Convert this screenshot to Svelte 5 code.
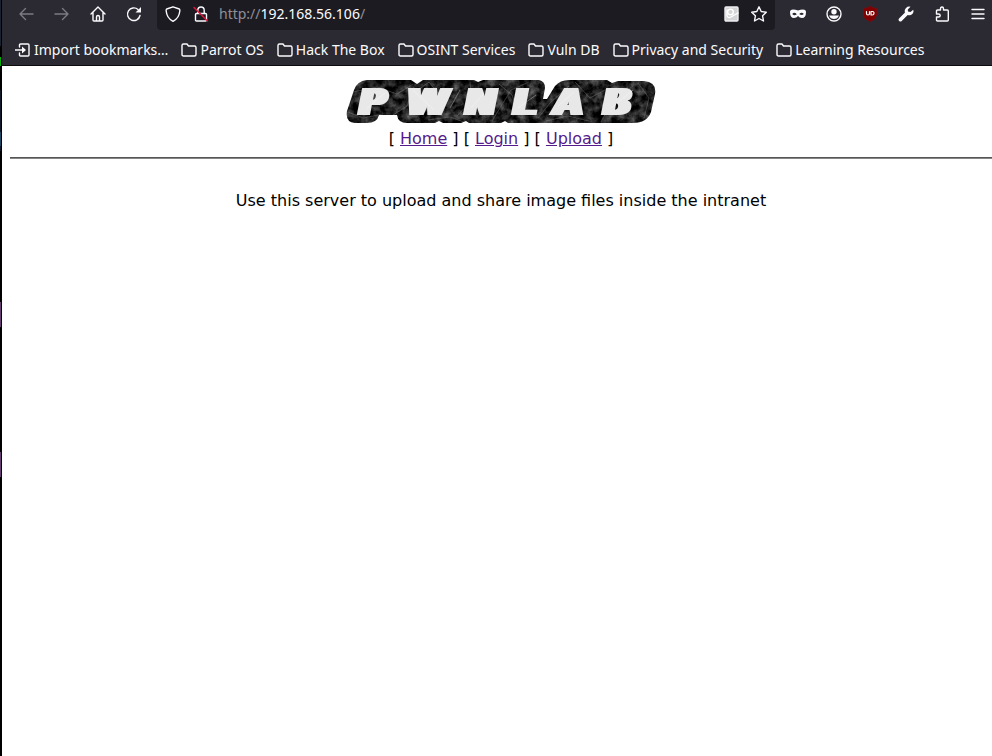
<script lang="ts">
  interface Bookmark {
    name: string
    kind: 'import' | 'folder'
  }

  const bookmarks: Bookmark[] = [
    { name: 'Import bookmarks…', kind: 'import' },
    { name: 'Parrot OS', kind: 'folder' },
    { name: 'Hack The Box', kind: 'folder' },
    { name: 'OSINT Services', kind: 'folder' },
    { name: 'Vuln DB', kind: 'folder' },
    { name: 'Privacy and Security', kind: 'folder' },
    { name: 'Learning Resources', kind: 'folder' },
  ]
  const links = ['Home', 'Login', 'Upload']

  let address = $state('192.168.56.106')
</script>

<div class="desktop">
  <div class="behind"></div>
  <div class="window">
    <header>
      <div class="toolbar">
        <nav class="tools">
          <button class="dim" aria-label="Back">
            <svg width="16" height="16" viewBox="0 0 16 16"><path d="M15 8H2M7.500 2.500 2 8l5.500 5.500" /></svg>
          </button>
          <button class="dim" aria-label="Forward">
            <svg width="16" height="16" viewBox="0 0 16 16"><path d="M1 8h13M8.500 2.500 14 8l-5.500 5.500" /></svg>
          </button>
          <button aria-label="Home page">
            <svg width="16" height="16" viewBox="0 0 16 16"><path d="M1 8 8 1l7 7M3 6.500V14q0 1 1 1h8q1 0 1-1V6.500M6.500 15v-4q0-1.500 1.500-1.500T9.500 11v4" /></svg>
          </button>
          <button aria-label="Reload">
            <svg width="16" height="16" viewBox="0 0 16 16"><path d="M14 9.500A6.300 6.300 0 1 1 12 3.500" /><path class="solid" d="M15 1v5.500H9.500z" /></svg>
          </button>
        </nav>
        <div class="urlbar">
          <button aria-label="Tracking protection">
            <svg width="16" height="16" viewBox="0 0 16 16"><path d="M8 .8 14.300 3Q15 3.200 14.800 5 14.300 12 8 15.300 1.700 12 1.200 5 1 3.200 1.700 3z" /></svg>
          </button>
          <button aria-label="Connection not secure">
            <svg width="16" height="16" viewBox="0 0 16 16"><path d="M4.800 7V4.500Q4.800 1 8 1t3.200 3.500V7M3.500 7.500h9q1 0 1 1V14q0 1-1 1h-9q-1 0-1-1V8.500q0-1 1-1z" /><path class="strike" d="M1 1.500 14.500 15" /></svg>
          </button>
          <label class="address">
            <span>http://</span><input type="text" aria-label="Address" size="13" bind:value={address} /><span>/</span>
          </label>
          <button aria-label="Reader">
            <svg width="16" height="16" viewBox="0 0 16 16"><rect class="note" x="2" y="1" width="13" height="14" rx="1" /><circle class="pale" cx="7.500" cy="6" r="2.800" /><path class="pale" d="M4 4v6q1 2 3 1.500l8-4.500" /></svg>
          </button>
          <button aria-label="Bookmark this page">
            <svg width="16" height="16" viewBox="0 0 16 16"><path d="m8 .8 2.200 4.700 5.100.7-3.700 3.600.9 5.200L8 12.500 3.500 15l.9-5.200L.7 6.200l5.100-.7z" /></svg>
          </button>
        </div>
        <nav class="tools extensions">
          <button aria-label="Private tab">
            <svg width="16" height="16" viewBox="0 0 16 16"><path class="solid" fill-rule="evenodd" d="M0 6q0-2.500 3-2.500 2.500 0 5 1 2.500-1 5-1 3 0 3 2.500 0 6-4 6-2.500 0-4-2-1.500 2-4 2-4 0-4-6zm2.200 2Q4.300 10.300 6.800 8.200 4.300 5.500 2.200 8zm7 0q2.500 2.200 4.600 0-2-2.500-4.600 0z" /></svg>
          </button>
          <button aria-label="Account">
            <svg width="16" height="16" viewBox="0 0 16 16"><circle cx="8" cy="8" r="7" /><circle class="solid" cx="8" cy="5.700" r="2.700" /><path class="solid" d="M3 9.500h10Q11.500 13 8 13T3 9.500z" /></svg>
          </button>
          <button aria-label="uBlock Origin">
            <svg width="16" height="16" viewBox="0 0 16 16"><path class="ublock" d="M8 .5Q11 2.500 14.500 2.500V9Q14 13 8 15.500 2 13 1.500 9V2.500Q5 2.500 8 .5z" /><path class="mark" d="M4.500 5.500V7.500Q4.500 9 6 9t1.500-1.500v-2M9 5.500V9h1.200Q12 9 12 7.200t-1.800-1.700z" /></svg>
          </button>
          <button aria-label="Developer tools">
            <svg width="16" height="16" viewBox="0 0 16 16"><path class="solid" d="M15.200 3.800 12.500 6 10 5.500 9.800 3.500 12.500.8Q10 0 8 2T7 6.500L1 12.500Q0 14 1.200 15t2.500 0l6-6Q12.500 9.800 14.300 8t.9-4.200z" /></svg>
          </button>
          <button aria-label="Extensions">
            <svg width="16" height="16" viewBox="0 0 16 16"><path d="M6.500 4V2.700Q6.500 1 8 1t1.500 1.700V4h3.800q1 0 1 1v9q0 1-1 1H3.500q-1 0-1-1v-3h2Q6.200 11 6.200 9.500T4.500 8h-2V5q0-1 1-1z" /></svg>
          </button>
          <button aria-label="Menu">
            <svg width="16" height="16" viewBox="0 0 16 16"><path d="M2 3.500h12M2 8h12M2 12.500h12" /></svg>
          </button>
        </nav>
      </div>
      <nav class="bookmarks">
        {#each bookmarks as bookmark}
          <button>
            {#if bookmark.kind === 'import'}
              <svg width="16" height="16" viewBox="0 0 16 16"><path d="M4.500 5V3q0-1 1-1H13q1 0 1 1v10q0 1-1 1H5.500q-1 0-1-1v-2M0 8h9" /><path class="solid" d="m7 4.500 4 3.500-4 3.500z" /></svg>
            {:else}
              <svg width="16" height="16" viewBox="0 0 16 16"><path d="M2.500 2H6L7.500 4h6Q15 4 15 5.500v7q0 1.500-1.500 1.500h-11Q1 14 1 12.500v-9Q1 2 2.500 2z" /></svg>
            {/if}
            {bookmark.name}
          </button>
        {/each}
      </nav>
    </header>

    <main>
      <svg class="logo" width="312" height="50" viewBox="0 0 312 50" role="img" aria-label="PWNLAB">
        <defs>
          <clipPath id="slab">
            <path d="M22 2H66L72 6 78 2H129L133 4 138 2H194Q200 3 200 10L198 21H202L210 8Q215 2 224 2H262L267 5 273 3H299Q312 4 310 16L306 34Q302 45 288 45H163L160 43 156 45H124L121 43 116 45H98L94 43 90 45H62Q53 45 52 37L34 37Q32 45 22 45H10Q0 44 2 33L9 12Q12 3 22 2z" />
          </clipPath>
          <filter id="marble" x="0" y="0" width="100%" height="100%" color-interpolation-filters="sRGB">
            <feTurbulence type="fractalNoise" baseFrequency="0.12" numOctaves="4" seed="8" />
            <feColorMatrix values=".7 0 0 0 -.22  .7 0 0 0 -.22  .7 0 0 0 -.22  0 0 0 0 1" />
          </filter>
          <filter id="fat" x="-10%" y="-10%" width="120%" height="120%">
            <feMorphology operator="dilate" radius="3 0" />
          </filter>
        </defs>
        <g clip-path="url(#slab)">
          <rect width="312" height="50" filter="url(#marble)" />
          <path class="vein" d="M8 14 32 9 52 16 68 6M42 41 62 28 69 9M65 18 84 4 93 15M112 38 127 22 125 4M147 43 166 12 184 4M154 6 167 17 174 35M193 40 205 25 224 8M230 4 245 20 262 11M256 44 268 22 288 8M293 5 304 20 299 40M3 34 18 40 38 36M83 42 105 39 119 44M201 43 223 38 244 43" />
        </g>
        <text x="14 62 120 168 209 258" y="37" filter="url(#fat)">PWNLAB</text>
        <path class="scratch" d="m22 30 18-15M68 12l21 20M105 30l10-18M126 30l13-15M173 30l18-13M213 28l16-14M266 30l22-18" />
      </svg>
      <div class="links">
        {#each links as link}
          [ <a href="#{link.toLowerCase()}">{link}</a> ]{' '}
        {/each}
      </div>
      <hr />
      <p>Use this server to upload and share image files inside the intranet</p>
    </main>
  </div>
</div>

<style>
  :global(body) {
    margin: 0;
    background: white;
  }
  .desktop {
    display: grid;
    grid-template-columns: 2px minmax(0, 1fr);
    min-height: 100vh;
  }
  /* slice of the terminal that stays visible left of the window */
  .behind {
    border-right: 1px solid black;
    background: linear-gradient(
      #1a2230 46px,
      #000 46px 57px,
      #00b000 57px 66px,
      #000 66px 90px,
      #111827 90px 132px,
      #1f4560 132px 146px,
      #111827 146px 151px,
      #000 151px 302px,
      #653d70 302px 327px,
      #000 327px 452px,
      #653d70 452px 477px,
      #000 477px
    );
  }
  .window {
    overflow: hidden;
  }
  header {
    background: #2b2a33;
    color: #fbfbfe;
    border-bottom: 1px solid #0c0c0d;
    font-family: "Noto Sans", sans-serif;
    font-size: 14px;
  }
  button {
    display: flex;
    align-items: center;
    justify-content: center;
    padding: 0;
    border: 0;
    background: none;
    color: inherit;
    font: inherit;
    white-space: nowrap;
  }
  header svg {
    flex: none;
    fill: none;
    stroke: currentColor;
    stroke-width: 1.4;
    stroke-linejoin: round;
    stroke-linecap: round;
  }
  header .solid {
    fill: currentColor;
    stroke: none;
  }
  .strike {
    stroke: #e2143c;
  }
  .note {
    fill: #d4d4d6;
    stroke: #ededf0;
  }
  .pale {
    stroke: white;
  }
  .ublock {
    fill: #800000;
    stroke: #7a0a10;
    stroke-width: 1;
  }
  .mark {
    stroke: white;
    stroke-width: 1.2;
  }
  .toolbar {
    display: flex;
    height: 30px;
    padding-left: 6px;
  }
  .tools {
    display: flex;
  }
  .tools button {
    width: 36px;
    height: 28px;
  }
  .dim {
    color: #7c7b82;
  }
  .urlbar {
    display: flex;
    flex: 1;
    align-items: center;
    min-width: 0;
    margin: 0 5px;
    padding: 0 2px 2px;
    box-sizing: border-box;
    background: #1c1b22;
    border-radius: 0 0 4px 4px;
  }
  .urlbar button {
    width: 28px;
    height: 28px;
  }
  .address {
    display: flex;
    flex: 1;
    min-width: 0;
    padding-left: 4px;
    line-height: 20px;
    color: #8f8f96;
  }
  input {
    field-sizing: content;
    padding: 0;
    border: 0;
    outline: 0;
    background: none;
    color: #fbfbfe;
    font: inherit;
    line-height: 20px;
  }
  .extensions {
    margin-right: -4px;
  }
  .bookmarks {
    display: flex;
    gap: 13px;
    height: 35px;
    padding: 0 13px;
    align-items: center;
  }
  .bookmarks button {
    gap: 3px;
    line-height: 20px;
    padding-top: 5px;
  }
  main {
    padding: 12px 0 0 8px;
    color: black;
    font-family: "DejaVu Sans", sans-serif;
    font-size: 16px;
    line-height: 19px;
    text-align: center;
  }
  .logo {
    display: block;
    margin: 0 auto;
  }
  .logo text {
    fill: #e8e8e8;
    font-family: "DejaVu Sans", sans-serif;
    font-size: 38px;
    font-weight: bold;
    font-style: oblique;
  }
  .vein {
    fill: none;
    stroke: #888;
    stroke-width: 1;
    opacity: 0.4;
  }
  .scratch {
    fill: none;
    stroke: white;
    stroke-width: 1;
    opacity: 0.3;
  }
  .links {
    padding: 1px 0 9px;
  }
  a {
    color: #551a8b;
  }
  hr {
    margin: 0;
    border: 0;
    border-top: 1px solid #555;
    border-bottom: 1px solid #858585;
  }
  p {
    margin: 32px 0 0;
  }
</style>
